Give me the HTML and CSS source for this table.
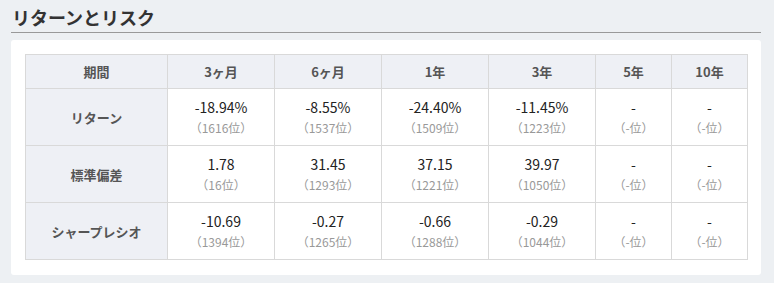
FILE: index.html
```html
<!DOCTYPE html>
<html lang="ja">
<head>
<meta charset="utf-8">
<link rel="stylesheet" href="styles.css">
</head>
<body>
<div class="page">
  <h2 class="title">リターンとリスク</h2>
  <div class="card">
    <table class="rr">
      <colgroup>
        <col class="c-head"><col class="c-mid"><col class="c-mid"><col class="c-mid"><col class="c-mid"><col class="c-sm"><col class="c-sm">
      </colgroup>
      <thead>
        <tr><th>期間</th><th>3ヶ月</th><th>6ヶ月</th><th>1年</th><th>3年</th><th>5年</th><th>10年</th></tr>
      </thead>
      <tbody>
        <tr>
          <th>リターン</th>
          <td><div class="v">-18.94%</div><div class="r">（1616位）</div></td>
          <td><div class="v">-8.55%</div><div class="r">（1537位）</div></td>
          <td><div class="v">-24.40%</div><div class="r">（1509位）</div></td>
          <td><div class="v">-11.45%</div><div class="r">（1223位）</div></td>
          <td><div class="v">-</div><div class="r">（-位）</div></td>
          <td><div class="v">-</div><div class="r">（-位）</div></td>
        </tr>
        <tr>
          <th>標準偏差</th>
          <td><div class="v">1.78</div><div class="r">（16位）</div></td>
          <td><div class="v">31.45</div><div class="r">（1293位）</div></td>
          <td><div class="v">37.15</div><div class="r">（1221位）</div></td>
          <td><div class="v">39.97</div><div class="r">（1050位）</div></td>
          <td><div class="v">-</div><div class="r">（-位）</div></td>
          <td><div class="v">-</div><div class="r">（-位）</div></td>
        </tr>
        <tr>
          <th>シャープレシオ</th>
          <td><div class="v">-10.69</div><div class="r">（1394位）</div></td>
          <td><div class="v">-0.27</div><div class="r">（1265位）</div></td>
          <td><div class="v">-0.66</div><div class="r">（1288位）</div></td>
          <td><div class="v">-0.29</div><div class="r">（1044位）</div></td>
          <td><div class="v">-</div><div class="r">（-位）</div></td>
          <td><div class="v">-</div><div class="r">（-位）</div></td>
        </tr>
      </tbody>
    </table>
  </div>
</div>
</body>
</html>
```

FILE: styles.css
```css
html, body {
  margin: 0;
  padding: 0;
  background: #edf0f3;
  font-family: "Noto Sans CJK JP", "Noto Sans", sans-serif;
}
.page {
  padding: 0 13px 0 11px;
}
.title {
  margin: 0;
  padding: 5px 0 3px 1px;
  height: 24px;
  font-size: 18px;
  line-height: 24px;
  font-weight: 700;
  color: #333;
  border-bottom: 1px solid #999;
}
.card {
  margin-top: 7px;
  background: #fff;
  border-radius: 3px;
  padding: 14px 14px 15px 14px;
}
.rr {
  border-collapse: collapse;
  width: 722px;
  table-layout: fixed;
}
.c-head { width: 142px; }
.c-mid { width: 107px; }
.c-sm { width: 76px; }
.rr th, .rr td {
  border: 1px solid #d9d9d9;
  text-align: center;
  padding: 0;
}
.rr thead th {
  height: 33px;
  background: #eef0f5;
  font-size: 13px;
  font-weight: 700;
  color: #555;
}
.rr tbody th {
  height: 56px;
  background: #eef0f5;
  font-size: 13px;
  font-weight: 700;
  color: #555;
}
.rr tbody td {
  height: 56px;
  vertical-align: middle;
}
.v {
  font-size: 14px;
  line-height: 22px;
  color: #222;
}
.r {
  font-size: 12px;
  line-height: 20px;
  color: #999;
}
```
